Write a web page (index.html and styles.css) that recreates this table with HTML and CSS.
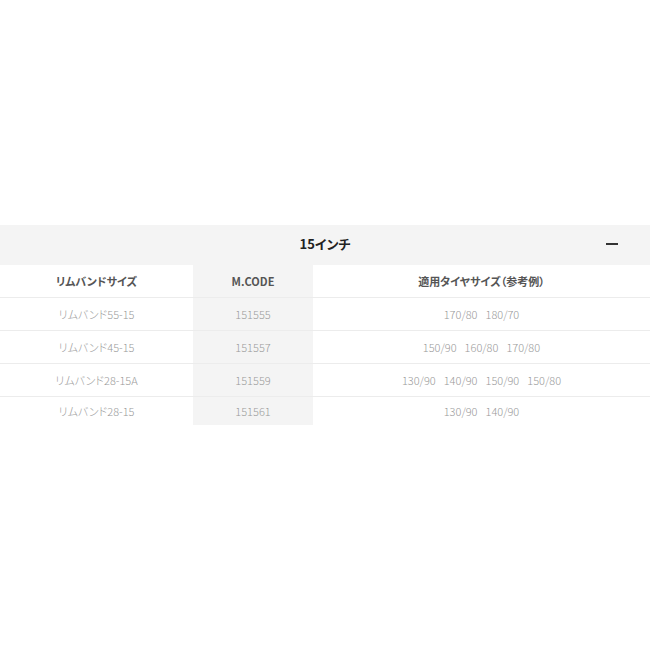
FILE: index.html
```html
<!DOCTYPE html>
<html lang="ja">
<head>
<meta charset="utf-8">
<link rel="stylesheet" href="styles.css">
</head>
<body>
<section class="acc">
  <div class="acc-head">
    <span class="acc-title">15インチ</span>
    <span class="acc-minus"></span>
  </div>
  <table class="tbl">
    <thead>
      <tr><th class="c1">リムバンドサイズ</th><th class="c2">M.CODE</th><th class="c3">適用タイヤサイズ（参考例）</th></tr>
    </thead>
    <tbody>
      <tr><td class="c1">リムバンド55-15</td><td class="c2">151555</td><td class="c3"><span class="sizes"><span>170/80</span><span>180/70</span></span></td></tr>
      <tr><td class="c1">リムバンド45-15</td><td class="c2">151557</td><td class="c3"><span class="sizes"><span>150/90</span><span>160/80</span><span>170/80</span></span></td></tr>
      <tr><td class="c1">リムバンド28-15A</td><td class="c2">151559</td><td class="c3"><span class="sizes"><span>130/90</span><span>140/90</span><span>150/90</span><span>150/80</span></span></td></tr>
      <tr class="last"><td class="c1">リムバンド28-15</td><td class="c2">151561</td><td class="c3"><span class="sizes"><span>130/90</span><span>140/90</span></span></td></tr>
    </tbody>
  </table>
</section>
</body>
</html>
```

FILE: styles.css
```css
html, body {
  margin: 0;
  padding: 0;
  background: #fff;
}
body {
  font-family: "Noto Sans CJK JP", "Noto Sans", sans-serif;
  font-feature-settings: "palt";
}
.acc {
  margin-top: 225px;
}
.acc-head {
  position: relative;
  height: 40px;
  box-sizing: border-box;
  padding-bottom: 4px;
  background: #f4f4f4;
  display: flex;
  align-items: center;
  justify-content: center;
}
.acc-title {
  font-size: 13px;
  font-weight: 700;
  color: #222;
}
.acc-minus {
  position: absolute;
  right: 32px;
  top: 18px;
  width: 12px;
  height: 2px;
  background: #333;
}
.tbl {
  width: 100%;
  border-collapse: collapse;
  table-layout: fixed;
}
.tbl th, .tbl td {
  text-align: center;
  padding: 0;
  height: 32px;
  border-bottom: 1px solid #ececec;
  font-size: 11px;
}
.tbl th {
  font-weight: 700;
  color: #555;
}
.tbl td {
  font-weight: 300;
  color: #9a9a9a;
}
.tbl .c1 { width: 193px; }
.tbl .c2 { width: 120px; background: #f4f4f4; }
.tbl tr.last td {
  border-bottom: none;
  height: 28px;
}
.sizes {
  display: inline-flex;
  gap: 8px;
}
```
